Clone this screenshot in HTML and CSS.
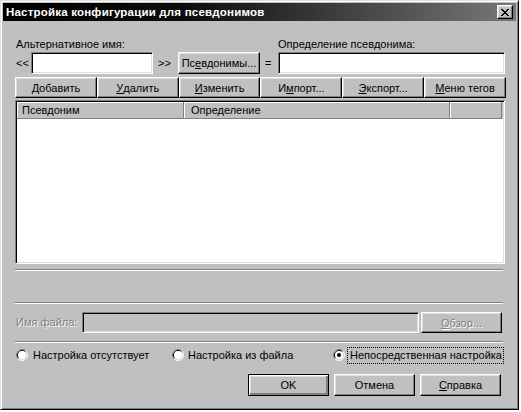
FILE: index.html
```html
<!DOCTYPE html>
<html lang="ru">
<head>
<meta charset="utf-8">
<title>Настройка конфигурации для псевдонимов</title>
<link rel="stylesheet" href="styles.css">
</head>
<body>
<div class="window">
  <div class="titlebar">
    <span class="title">Настройка конфигурации для псевдонимов</span>
    <div class="close">
      <svg width="8" height="7" viewBox="0 0 8 7"><path d="M0 0h2v1h1v1h2v-1h1v-1h2v1h-1v1h-1v1h-1v1h1v1h1v1h1v1h-2v-1h-1v-1h-2v1h-1v1h-2v-1h1v-1h1v-1h1v-1h-1v-1h-1v-1h-1z" fill="#000"/></svg>
    </div>
  </div>
  <div class="content">
    <div class="label-row">
      <span class="lbl-alt">Альтернативное имя:</span>
      <span class="lbl-def">Определение псевдонима:</span>
    </div>
    <div class="input-row">
      <span class="arrows-l">&lt;&lt;</span>
      <div class="field field-alt"></div>
      <span class="arrows-r">&gt;&gt;</span>
      <div class="btn btn-alias">Пс<u>е</u>вдонимы...</div>
      <span class="eq">=</span>
      <div class="field field-def"></div>
    </div>
    <div class="btn-row">
      <div class="btn"><u>Д</u>обавить</div>
      <div class="btn"><u>У</u>далить</div>
      <div class="btn"><u>И</u>зменить</div>
      <div class="btn">И<u>м</u>порт...</div>
      <div class="btn"><u>Э</u>кспорт...</div>
      <div class="btn"><u>М</u>еню тегов</div>
    </div>
    <div class="list">
      <div class="list-head">
        <div class="hcell hcell-alias">Псевдоним</div>
        <div class="hcell hcell-def">Определение</div>
        <div class="hcell hcell-rest"></div>
      </div>
      <div class="list-body"></div>
    </div>
    <div class="groove groove-1"></div>
    <div class="groove groove-2"></div>
    <div class="file-row">
      <span class="disabled lbl-file">Имя файла:</span>
      <div class="field field-file"></div>
      <div class="btn btn-browse disabled"><u>О</u>бзор...</div>
    </div>
    <div class="groove groove-3"></div>
    <div class="radio-row">
      <div class="radio-item radio-1">
        <svg class="radio" width="12" height="12" viewBox="0 0 12 12">
          <path d="M2.11 9.89 A5.5 5.5 0 0 1 9.89 2.11" stroke="#808080" fill="none"/>
          <path d="M9.89 2.11 A5.5 5.5 0 0 1 2.11 9.89" stroke="#fff" fill="none"/>
          <path d="M2.82 9.18 A4.5 4.5 0 0 1 9.18 2.82" stroke="#000" fill="none"/>
          <path d="M9.18 2.82 A4.5 4.5 0 0 1 2.82 9.18" stroke="#dfdfdf" fill="none"/>
          <circle cx="6" cy="6" r="4" fill="#fff"/>
        </svg>
        <span>Настройка отсутствует</span>
      </div>
      <div class="radio-item radio-2">
        <svg class="radio" width="12" height="12" viewBox="0 0 12 12">
          <path d="M2.11 9.89 A5.5 5.5 0 0 1 9.89 2.11" stroke="#808080" fill="none"/>
          <path d="M9.89 2.11 A5.5 5.5 0 0 1 2.11 9.89" stroke="#fff" fill="none"/>
          <path d="M2.82 9.18 A4.5 4.5 0 0 1 9.18 2.82" stroke="#000" fill="none"/>
          <path d="M9.18 2.82 A4.5 4.5 0 0 1 2.82 9.18" stroke="#dfdfdf" fill="none"/>
          <circle cx="6" cy="6" r="4" fill="#fff"/>
        </svg>
        <span>Настройка из файла</span>
      </div>
      <div class="radio-item radio-3">
        <svg class="radio" width="12" height="12" viewBox="0 0 12 12">
          <path d="M2.11 9.89 A5.5 5.5 0 0 1 9.89 2.11" stroke="#808080" fill="none"/>
          <path d="M9.89 2.11 A5.5 5.5 0 0 1 2.11 9.89" stroke="#fff" fill="none"/>
          <path d="M2.82 9.18 A4.5 4.5 0 0 1 9.18 2.82" stroke="#000" fill="none"/>
          <path d="M9.18 2.82 A4.5 4.5 0 0 1 2.82 9.18" stroke="#dfdfdf" fill="none"/>
          <circle cx="6" cy="6" r="4" fill="#fff"/>
          <circle cx="6" cy="6" r="2" fill="#000"/>
        </svg>
        <span class="focus">Непосредственная настройка</span>
      </div>
    </div>
    <div class="bottom-row">
      <div class="btn btn-default">OK</div>
      <div class="btn">Отмена</div>
      <div class="btn"><u>С</u>правка</div>
    </div>
  </div>
</div>
</body>
</html>
```
FILE: styles.css
```css
* { box-sizing: border-box; }
html, body { margin: 0; padding: 0; background: #fff; }
body {
  font-family: "Liberation Sans", Arial, sans-serif;
  font-size: 11px;
  color: #000;
}
.window {
  width: 519px;
  height: 410px;
  background: #c0c0c0;
  border: 1px solid;
  border-color: #dfdfdf #000 #000 #dfdfdf;
  box-shadow: inset 1px 1px #fff, inset -1px -1px #808080;
  padding: 2px;
  display: flex;
  flex-direction: column;
}
.titlebar {
  height: 18px;
  flex: none;
  display: flex;
  align-items: center;
  justify-content: space-between;
  padding-left: 3px;
  background: linear-gradient(to right, #000 0%, #0c0c0c 35%, #787878 100%);
}
.title {
  color: #fff;
  font-weight: bold;
  font-size: 11.5px;
  letter-spacing: 0.2px;
}
.close {
  width: 16px;
  height: 14px;
  margin-right: 3px;
  background: #c0c0c0;
  border: 1px solid;
  border-color: #fff #000 #000 #fff;
  box-shadow: inset -1px -1px #808080, inset 1px 1px #dfdfdf;
  display: flex;
  align-items: center;
  justify-content: center;
}
.close svg { display: block; }
.content {
  flex: 1;
  display: flex;
  flex-direction: column;
  padding: 0 10px 0 12px;
}
.label-row {
  margin-top: 17px;
  height: 13px;
  line-height: 13px;
  display: flex;
}
.lbl-alt { width: 263px; padding-left: 1px; }
.input-row {
  margin-top: 1px;
  height: 22px;
  display: flex;
  align-items: stretch;
}
.arrows-l { width: 16px; padding-left: 1px; line-height: 22px; }
.arrows-r { width: 25px; padding-left: 5px; line-height: 22px; }
.eq { width: 18px; padding-left: 5px; line-height: 22px; }
.field {
  background: #fff;
  border: 1px solid;
  border-color: #808080 #fff #fff #808080;
  box-shadow: inset 1px 1px #000, inset -1px -1px #dfdfdf;
}
.field-alt { width: 122px; }
.field-def { flex: 1; margin-right: 1px; }
.btn {
  background: #c0c0c0;
  border: 1px solid;
  border-color: #fff #000 #000 #fff;
  box-shadow: inset -1px -1px #808080, inset 1px 1px #dfdfdf;
  display: flex;
  align-items: center;
  justify-content: center;
  white-space: nowrap;
}
.btn u { text-decoration: underline; text-underline-offset: 1px; }
.btn-alias { width: 82px; }
.btn-row {
  margin-top: 3px;
  height: 21px;
  display: flex;
}
.btn-row .btn { flex: 1; }
.list {
  margin-top: 2px;
  height: 164px;
  margin-right: 1px;
  border: 1px solid;
  border-color: #808080 #fff #fff #808080;
  box-shadow: inset 1px 1px #000, inset -1px -1px #dfdfdf;
  padding: 1px;
  display: flex;
  flex-direction: column;
}
.list-head {
  height: 17px;
  display: flex;
  flex: none;
}
.hcell {
  background: #c0c0c0;
  box-shadow: inset -1px -1px #808080, inset 1px 1px #fff;
  line-height: 16px;
  padding-left: 5px;
}
.hcell-alias { width: 167px; }
.hcell-def { width: 266px; padding-left: 7px; }
.hcell-rest { width: 52px; }
.list-body { flex: 1; background: #fff; }
.groove {
  height: 2px;
  border-top: 1px solid #808080;
  border-bottom: 1px solid #fff;
  margin-right: 3px;
}
.groove-1 { margin-top: 5px; }
.groove-2 { margin-top: 31px; }
.groove-3 { margin-top: 8px; }
.file-row {
  margin-top: 8px;
  height: 21px;
  display: flex;
  align-items: stretch;
}
.lbl-file { width: 67px; padding-left: 1px; line-height: 21px; }
.field-file {
  width: 337px;
  background: #c0c0c0;
}
.btn-browse { width: 81px; margin-left: 2px; }
.disabled { color: #808080; text-shadow: 1px 1px #fff; }
.radio-row {
  margin-top: 4px;
  height: 16px;
  display: flex;
  align-items: center;
}
.radio-item { display: flex; align-items: center; }
.radio { display: block; flex: none; }
.radio-1 { width: 157px; padding-left: 1px; }
.radio-1 .radio { margin-right: 5px; }
.radio-2 { width: 161px; }
.radio-2 .radio { margin-right: 4px; }
.radio-3 .radio { margin-right: 2px; }
.focus {
  border: 1px dotted #000;
  padding: 1px 1px 1px 2px;
  line-height: 13px;
}
.bottom-row {
  margin-top: 11px;
  height: 22px;
  display: flex;
  justify-content: flex-end;
  gap: 5px;
  padding-right: 5px;
}
.bottom-row .btn { width: 81px; }
.btn-default {
  border: 1px solid #000;
  box-shadow: inset 1px 1px #fff, inset -1px -1px #808080, inset -2px -2px #808080, inset 2px 2px #dfdfdf;
}
```
